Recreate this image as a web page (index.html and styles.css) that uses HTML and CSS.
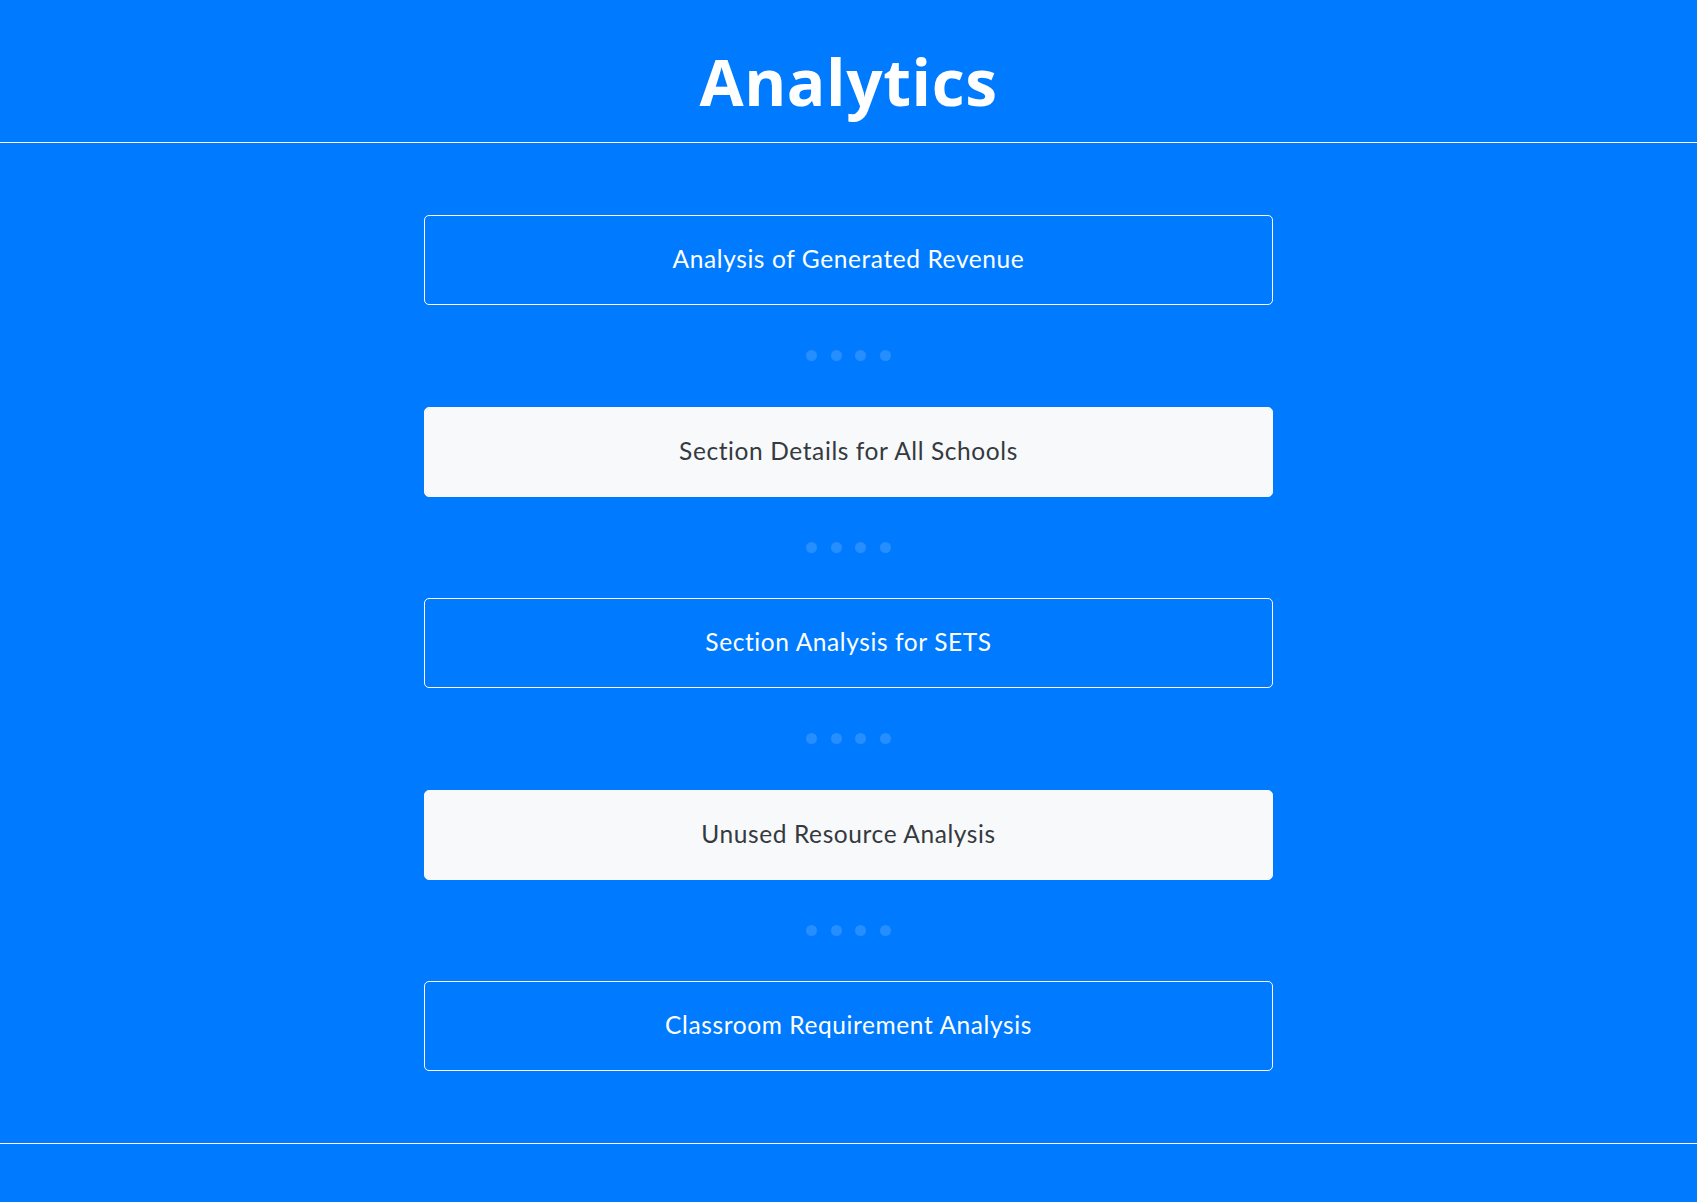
FILE: index.html
```html
<!DOCTYPE html>
<html lang="en">
<head>
<meta charset="utf-8">
<title>Analytics</title>
<link rel="stylesheet" href="styles.css">
</head>
<body>
<header class="page-header">
  <h1 class="page-title">Analytics</h1>
</header>
<main class="analytics-list">
  <a class="analytics-item item-outline" href="#">Analysis of Generated Revenue</a>
  <div class="dots"><span></span><span></span><span></span><span></span></div>
  <a class="analytics-item item-light" href="#">Section Details for All Schools</a>
  <div class="dots"><span></span><span></span><span></span><span></span></div>
  <a class="analytics-item item-outline" href="#">Section Analysis for SETS</a>
  <div class="dots"><span></span><span></span><span></span><span></span></div>
  <a class="analytics-item item-light" href="#">Unused Resource Analysis</a>
  <div class="dots"><span></span><span></span><span></span><span></span></div>
  <a class="analytics-item item-outline" href="#">Classroom Requirement Analysis</a>
</main>
<footer class="page-footer"></footer>
</body>
</html>
```

FILE: styles.css
```css
* { box-sizing: border-box; }
html, body {
  margin: 0;
  padding: 0;
  background: #007bff;
  min-height: 100%;
}
body {
  font-family: Lato, "Open Sans", sans-serif;
  color: #fff;
}
.page-header {
  height: 143px;
  border-bottom: 1px solid #fff;
  display: flex;
  align-items: center;
  justify-content: center;
}
.page-title {
  margin: 0;
  padding-top: 22px;
  font-family: "Open Sans", sans-serif;
  font-weight: 700;
  font-size: 64px;
  letter-spacing: 0.6px;
  line-height: 1;
  color: #fff;
}
.analytics-list {
  display: flex;
  flex-direction: column;
  align-items: center;
  padding: 72px 0;
  border-bottom: 1px solid #fff;
}
.analytics-item {
  width: 50%;
  height: 90px;
  display: flex;
  align-items: center;
  justify-content: center;
  padding-bottom: 1px;
  border: 1px solid #fff;
  border-radius: 5px;
  font-size: 24.5px;
  letter-spacing: 0.6px;
  text-decoration: none;
  line-height: 1;
}
.item-outline {
  background: transparent;
  color: #fff;
}
.item-light {
  background: #f8f9fa;
  border-color: #f8f9fa;
  color: #343a40;
}
.dots {
  display: flex;
  gap: 13.4px;
  margin: 45.25px 0;
  height: 11px;
}
.dots span {
  width: 11px;
  height: 11px;
  border-radius: 50%;
  background: rgba(255, 255, 255, 0.15);
}
.page-footer {
  height: 59px;
}
```
